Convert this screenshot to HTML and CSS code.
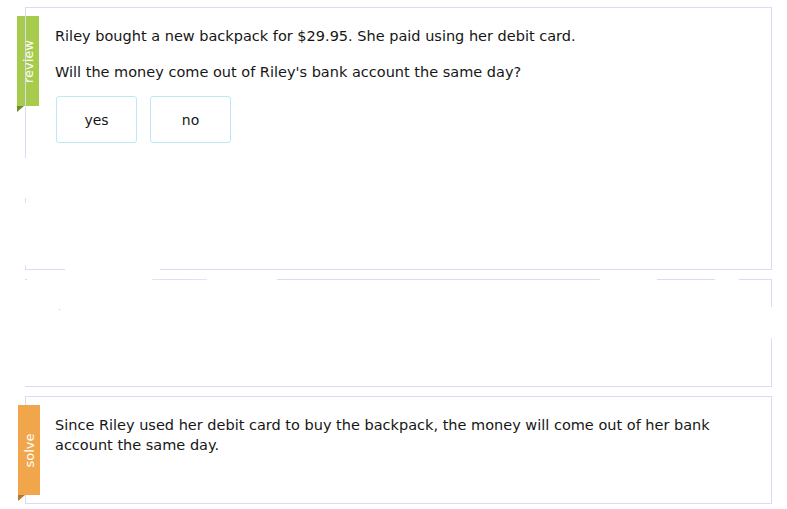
FILE: index.html
```html
<!DOCTYPE html>
<html>
<head>
<meta charset="utf-8">
<link rel="stylesheet" href="styles.css">
</head>
<body>
<div class="page">
  <section class="card card-review">
    <div class="tab tab-green"><span>review</span></div>
    <div class="left-line"></div>
    <p class="line">Riley bought a new backpack for $29.95. She paid using her debit card.</p>
    <p class="line q">Will the money come out of Riley's bank account the same day?</p>
    <div class="choices">
      <button class="choice">yes</button>
      <button class="choice">no</button>
    </div>
    <div class="bottom-line"></div>
  </section>
  <section class="card card-blank">
    <div class="top-line"></div>
    <div class="right-mask"></div>
    <div class="speck"></div>
  </section>
  <section class="card card-solve">
    <div class="tab tab-orange"><span>solve</span></div>
    <p class="line">Since Riley used her debit card to buy the backpack, the money will come out of her bank account the same day.</p>
  </section>
</div>
</body>
</html>
```

FILE: styles.css
```css
* { box-sizing: border-box; }
html, body { margin: 0; padding: 0; background: #fff; }
body {
  font-family: "DejaVu Sans", Verdana, sans-serif;
  font-size: 14.5px;
  color: #161616;
}
.page {
  padding: 7px 15px 0 25px;
  display: flex;
  flex-direction: column;
  gap: 9px;
}
.card {
  position: relative;
  border: 1px solid #dedaf3;
  background: #fff;
}
.card-review {
  height: 263px;
  padding: 18px 20px 0 30px;
  border-left: none;
  border-bottom: none;
}
.left-line {
  position: absolute;
  left: 0;
  top: -1px;
  width: 1px;
  height: 263px;
  background: linear-gradient(to bottom,
    #dedaf3 0, #dedaf3 151px, transparent 151px,
    transparent 191px, #dedaf3 191px, #dedaf3 196px, transparent 196px,
    transparent 258px, #dedaf3 258px);
}
.bottom-line {
  position: absolute;
  left: 0;
  right: -1px;
  bottom: 0;
  height: 1px;
  background: linear-gradient(to right,
    #dedaf3 0, #dedaf3 40px, transparent 40px,
    transparent 135px, #dedaf3 135px);
}
.line {
  margin: 0;
  line-height: 20px;
}
.q { margin-top: 16px; }
.choices {
  display: flex;
  gap: 13px;
  margin-top: 14px;
  padding-left: 1px;
}
.choice {
  width: 81px;
  height: 47px;
  border: 1px solid #bde8f8;
  border-radius: 3px;
  background: #fff;
  font-family: "DejaVu Sans", Verdana, sans-serif;
  font-size: 14px;
  color: #161616;
  padding: 0;
}
.card-blank {
  height: 108px;
  border-top: none;
  border-left: none;
}
.top-line {
  height: 1px;
  margin-right: -1px;
  background: linear-gradient(to right,
    #dedaf3 0, #dedaf3 2px, transparent 2px,
    transparent 127px, #e6e3f6 127px, #dedaf3 150px, #e6e3f6 182px, transparent 182px,
    transparent 252px, #dedaf3 252px, #dedaf3 575px, transparent 575px,
    transparent 632px, #dedaf3 632px, #dedaf3 690px, transparent 690px,
    transparent 714px, #dedaf3 714px);
}
.right-mask {
  position: absolute;
  right: -1px;
  top: 28px;
  width: 1px;
  height: 31px;
  background: #fff;
}
.speck {
  position: absolute;
  left: 34px;
  top: 30px;
  width: 1px;
  height: 1px;
  background: #c8c8c8;
}
.card-solve {
  height: 108px;
  padding: 18px 40px 0 29px;
}
.tab {
  position: absolute;
  left: -8px;
  width: 22px;
  color: #fff;
  font-size: 13px;
  display: flex;
  align-items: center;
  justify-content: center;
}
.tab span {
  transform: rotate(-90deg);
  white-space: nowrap;
  line-height: 1;
}
.tab::after {
  content: "";
  position: absolute;
  left: 0;
  bottom: -6px;
  width: 0;
  height: 0;
  border-top: 6px solid transparent;
  border-right: 7px solid transparent;
}
.tab-green {
  top: 8px;
  height: 90px;
  background: #a7cb4d;
}
.tab-green::after { border-top-color: #6d8c2c; }
.tab-orange {
  top: 8px;
  height: 90px;
  background: #f2a64b;
}
.tab-orange::after { border-top-color: #b4782e; }
```
